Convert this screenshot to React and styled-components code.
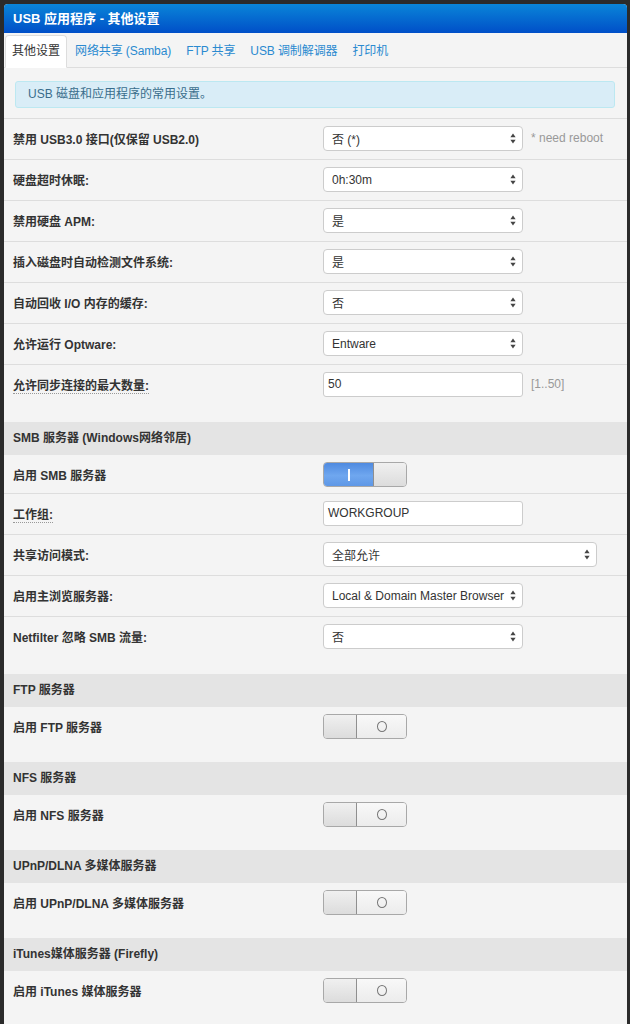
import React from 'react'
import styled, { createGlobalStyle } from 'styled-components'

const GlobalStyle = createGlobalStyle`
  html, body { margin: 0; padding: 0; background: #2b2b2b; }
  body {
    font-family: "Liberation Sans", "Noto Sans CJK SC", sans-serif;
    font-size: 12px;
    color: #333;
  }
`

const Panel = styled.div`
  margin: 4px 3px 0 4px;
  background: #f4f4f4;
  border-radius: 4px 4px 0 0;
  overflow: hidden;
  min-height: 1030px;
`

const Title = styled.div`
  height: 29px;
  line-height: 29px;
  padding: 0 9px;
  background: linear-gradient(#0a85d8, #004fc8);
  color: #fff;
  font-weight: bold;
  font-size: 13px;
`

const Tabs = styled.ul`
  display: flex;
  margin: 0;
  padding: 2px 0 0 1px;
  list-style: none;
  border-bottom: 1px solid #ddd;
`

const Tab = styled.li`
  height: 31px;
  line-height: 31px;
  padding: 0 6px;
  margin-right: 1px;
  margin-bottom: -1px;
  font-size: 12px;
  letter-spacing: ${p => (p.$active ? '0' : '-0.1px')};
  color: ${p => (p.$active ? '#333' : '#2a8ad0')};
  background: ${p => (p.$active ? '#fff' : 'transparent')};
  border: 1px solid ${p => (p.$active ? '#ddd' : 'transparent')};
  border-bottom-color: ${p => (p.$active ? '#fff' : 'transparent')};
  border-radius: 4px 4px 0 0;
`

const Info = styled.div`
  margin: 13px 12px 10px 11px;
  height: 25px;
  line-height: 25px;
  padding: 0 12px;
  border: 1px solid #bce8f1;
  border-radius: 3px;
  background: #d9edf7;
  color: #3a6d8c;
`

const Group = styled.div`
  padding-bottom: 17px;
`

const SectionHead = styled.div`
  height: 33px;
  line-height: 33px;
  padding: 0 9px;
  background: #e4e4e4;
  font-weight: bold;
`

const Row = styled.div`
  display: grid;
  grid-template-columns: 302px auto 1fr;
  align-items: center;
  column-gap: 8px;
  padding: 7px 9px 8px;
  border-top: 1px solid #ddd;

  ${SectionHead} + & {
    border-top: none;
    padding: 7px 9px 6px;
  }
`

const Label = styled.div`
  font-weight: bold;
  white-space: nowrap;
`

const Abbr = styled.span`
  border-bottom: 1px dotted #999;
`

const Note = styled.div`
  color: #999;
  margin-top: -2px;
`

const Select = styled.div`
  display: flex;
  align-items: center;
  justify-content: space-between;
  width: ${p => (p.$wide ? 274 : 200)}px;
  height: 25px;
  box-sizing: border-box;
  padding: 0 6px 0 8px;
  border: 1px solid #ccc;
  border-radius: 4px;
  background: #fff;
  white-space: nowrap;
`

const TextInput = styled.div`
  width: 200px;
  height: 25px;
  box-sizing: border-box;
  padding: 0 4px;
  line-height: 23px;
  border: 1px solid #ccc;
  border-radius: 3px;
  background: #fff;
`

const Switch = styled.div`
  display: flex;
  flex-direction: ${p => (p.$on ? 'row' : 'row-reverse')};
  width: 84px;
  height: 25px;
  box-sizing: border-box;
  border: 1px solid #a8a8a8;
  border-radius: 4px;
  overflow: hidden;
`

const SwitchFace = styled.div`
  width: 49px;
  display: flex;
  align-items: center;
  justify-content: center;
  background: ${p =>
    p.$on
      ? 'linear-gradient(#4f8ae0 0%, #6fa7ef 55%, #5e97e6 100%)'
      : 'linear-gradient(#f8f8f8, #ececec)'};
`

const Knob = styled.div`
  flex: 1;
  background: linear-gradient(#f0f0f0, #dcdcdc);
  border-${p => (p.$on ? 'left' : 'right')}: 1px solid #8f8f8f;
`

const OnMark = styled.span`
  width: 2px;
  height: 12px;
  background: #fff;
`

const OffMark = styled.span`
  width: 8px;
  height: 9px;
  border: 1.5px solid #777;
  border-radius: 50%;
`

const Arrows = () => (
  <svg width="6" height="11" viewBox="0 0 6 11">
    <path d="M3 0.5 L5.6 4.2 H0.4 Z" fill="#444" />
    <path d="M3 10.5 L5.6 6.8 H0.4 Z" fill="#444" />
  </svg>
)

const Toggle = ({ on }) => (
  <Switch $on={on}>
    <SwitchFace $on={on}>{on ? <OnMark /> : <OffMark />}</SwitchFace>
    <Knob $on={on} />
  </Switch>
)

const Dropdown = ({ value, wide }) => (
  <Select $wide={wide}>
    <span>{value}</span>
    <Arrows />
  </Select>
)

const Field = ({ row }) => {
  if (row.toggle !== undefined) return <Toggle on={row.toggle} />
  if (row.input) return <TextInput>{row.input}</TextInput>
  return <Dropdown value={row.select} wide={row.wide} />
}

const groups = [
  {
    rows: [
      { label: '禁用 USB3.0 接口(仅保留 USB2.0)', select: '否 (*)', note: '* need reboot' },
      { label: '硬盘超时休眠:', select: '0h:30m' },
      { label: '禁用硬盘 APM:', select: '是' },
      { label: '插入磁盘时自动检测文件系统:', select: '是' },
      { label: '自动回收 I/O 内存的缓存:', select: '否' },
      { label: '允许运行 Optware:', select: 'Entware' },
      { label: '允许同步连接的最大数量:', abbr: true, input: '50', note: '[1..50]' },
    ],
  },
  {
    title: 'SMB 服务器 (Windows网络邻居)',
    rows: [
      { label: '启用 SMB 服务器', toggle: true },
      { label: '工作组:', abbr: true, input: 'WORKGROUP' },
      { label: '共享访问模式:', select: '全部允许', wide: true },
      { label: '启用主浏览服务器:', select: 'Local & Domain Master Browser' },
      { label: 'Netfilter 忽略 SMB 流量:', select: '否' },
    ],
  },
  { title: 'FTP 服务器', rows: [{ label: '启用 FTP 服务器', toggle: false }] },
  { title: 'NFS 服务器', rows: [{ label: '启用 NFS 服务器', toggle: false }] },
  { title: 'UPnP/DLNA 多媒体服务器', rows: [{ label: '启用 UPnP/DLNA 多媒体服务器', toggle: false }] },
  { title: 'iTunes媒体服务器 (Firefly)', rows: [{ label: '启用 iTunes 媒体服务器', toggle: false }] },
]

const tabs = ['其他设置', '网络共享 (Samba)', 'FTP 共享', 'USB 调制解调器', '打印机']

export default function App() {
  return (
    <>
      <GlobalStyle />
      <Panel>
        <Title>USB 应用程序 - 其他设置</Title>
        <Tabs>
          {tabs.map((t, i) => (
            <Tab key={t} $active={i === 0}>{t}</Tab>
          ))}
        </Tabs>
        <Info>USB 磁盘和应用程序的常用设置。</Info>

        {groups.map((g, gi) => (
          <Group key={gi}>
            {g.title && <SectionHead>{g.title}</SectionHead>}
            {g.rows.map(r => (
              <Row key={r.label}>
                <Label>{r.abbr ? <Abbr>{r.label}</Abbr> : r.label}</Label>
                <Field row={r} />
                {r.note ? <Note>{r.note}</Note> : <span />}
              </Row>
            ))}
          </Group>
        ))}
      </Panel>
    </>
  )
}
